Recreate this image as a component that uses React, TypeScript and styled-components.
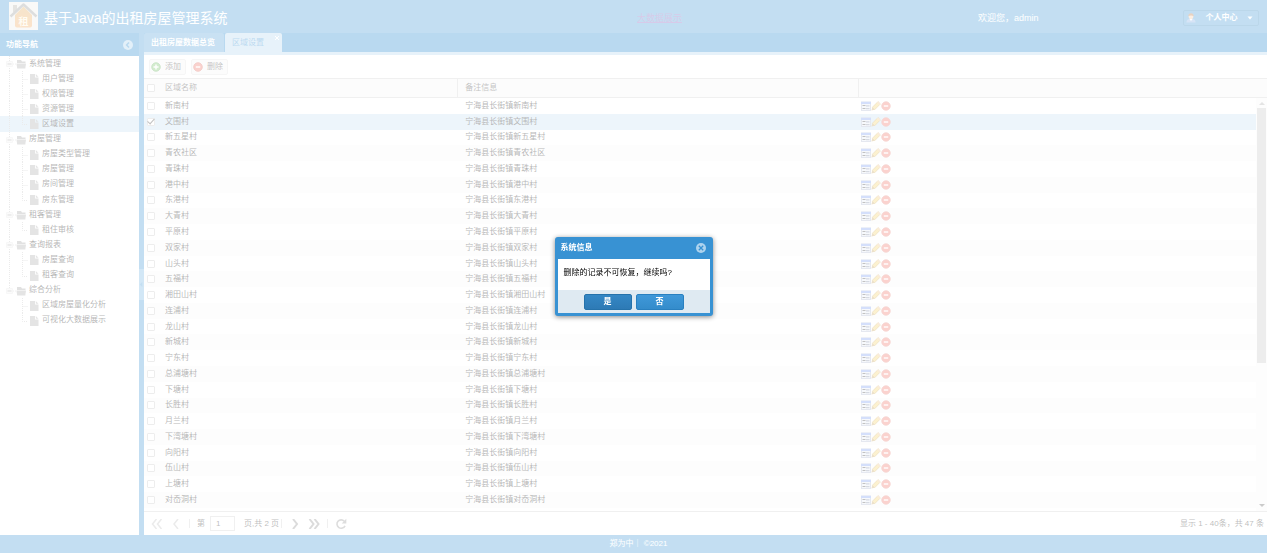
import React from 'react';
import styled, { createGlobalStyle, css } from 'styled-components';

const BLUE = '#3892d3';
const DEEP = '#157fcc';
const SOFT = '#add2ed';
const FONT = '"Liberation Sans", "Noto Sans CJK SC", sans-serif';

const GlobalStyle = createGlobalStyle`
  *, *::before, *::after { box-sizing: border-box; }
  body { margin: 0; font: 8px/12px ${FONT}; color: #000; background: #fff; }
  button, input { font: inherit; color: inherit; margin: 0; padding: 0; }
  button { border: 0; background: none; cursor: pointer; }
  ul { list-style: none; margin: 0; padding: 0; }
  svg { display: block; flex: none; }
`;

const Page = styled.div`
  display: flex;
  flex-direction: column;
  height: 100vh;
  background: ${BLUE};
`;

const TopBar = styled.header`
  flex: none;
  display: grid;
  grid-template-columns: 637fr 341fr 289fr;
  align-items: center;
  height: 33px;
  padding-bottom: 1px;
  color: #fff;
`;

const Brand = styled.div`
  display: flex;
  align-items: center;
  gap: 6px;
  padding-left: 9px;
`;

const Title = styled.h1`
  margin: 0;
  padding-top: 3px;
  font-size: 14px;
  line-height: 20px;
  font-weight: 400;
`;

const BigDataLink = styled.a`
  padding-top: 3px;
  font-size: 9px;
  color: #7a4fb4;
`;

const UserArea = styled.div`
  display: flex;
  align-items: center;
  justify-content: space-between;
  padding: 4px 8px 0 0;
  font-size: 9px;
`;

const UserButton = styled.button`
  display: flex;
  align-items: center;
  justify-content: space-between;
  width: 76px;
  height: 16px;
  padding: 0 5px 0 2px;
  border: 1px solid #1c78ba;
  border-radius: 2px;
  font-size: 8px;
  font-weight: 700;
`;

const Middle = styled.div`
  flex: 1;
  min-height: 0;
  display: flex;
`;

const Side = styled.aside`
  flex: none;
  width: 139px;
  background: #fff;
`;

const SideHeader = styled.div`
  display: flex;
  align-items: center;
  justify-content: space-between;
  height: 23px;
  padding: 0 6px;
  background: ${DEEP};
  color: #fff;
  font-weight: 700;
`;

const Tree = styled.ul`
  display: grid;
  grid-auto-rows: 1fr;
  height: 272px;
`;

const TreeRow = styled.li<{ $selected?: boolean }>`
  display: flex;
  align-items: center;
  min-height: 0;
  background: ${p => (p.$selected ? '#c1ddf1' : 'transparent')};
`;

const TreeLabel = styled.span`
  padding-left: 3px;
  white-space: nowrap;
`;

const Splitter = styled.div`
  flex: none;
  display: flex;
  align-items: center;
  width: 5px;
`;

const SplitHandle = styled.button`
  display: grid;
  place-items: center;
  width: 5px;
  height: 31px;
  background: #68addf;
`;

const Main = styled.main`
  flex: 1;
  min-width: 0;
  display: flex;
  flex-direction: column;
  background: #fff;
`;

const TabBar = styled.div`
  flex: none;
  display: flex;
  gap: 1px;
  height: 22px;
  background: ${DEEP};
  border-bottom: 3px solid ${SOFT};
`;

const Tab = styled.div<{ $active?: boolean }>`
  display: flex;
  padding: 0 3px 0 7px;
  border-radius: 2px 2px 0 0;
  background: ${p => (p.$active ? SOFT : '#4b9cd7')};
  color: ${p => (p.$active ? DEEP : '#fff')};
`;

const TabButton = styled.button<{ $active?: boolean }>`
  padding-right: ${p => (p.$active ? 11 : 6)}px;
  font-weight: ${p => (p.$active ? 400 : 700)};
`;

const TabClose = styled.button`
  align-self: flex-start;
  padding-top: 3px;
`;

const Toolbar = styled.div`
  flex: none;
  display: flex;
  align-items: center;
  gap: 5px;
  height: 24px;
  padding: 0 5px;
  border-bottom: 1px solid #cecece;
`;

const ToolButton = styled.button`
  display: flex;
  align-items: center;
  gap: 4px;
  height: 16px;
  width: 37px;
  padding-left: 1px;
  border: 1px solid #e1e1e1;
  border-radius: 2px;
  background: #f5f5f5;
  color: #333;
`;

const GridArea = styled.div`
  flex: 1;
  min-height: 0;
  display: flex;
  background: #fff;
`;

const TableBox = styled.div`
  flex: 1;
  min-width: 0;
  padding-bottom: 3px;
`;

const Table = styled.table`
  width: 100%;
  height: 100%;
  table-layout: fixed;
  border-collapse: separate;
  border-spacing: 0;
`;

const HeadCell = styled.th<{ $divided?: boolean }>`
  height: 19px;
  padding: 0 0 0 7px;
  text-align: left;
  font-weight: 400;
  color: #333;
  background: #f5f5f5;
  border-bottom: 1px solid #cecece;
  ${p => p.$divided && css`border-right: 1px solid #cecece;`}
`;

const Row = styled.tr<{ $selected?: boolean }>`
  background: #fff;
  &:nth-child(even) { background: #f8f8f8; }
  ${p => p.$selected && css`&&:nth-child(even) { background: #c1ddf1; }`}
`;

const Cell = styled.td`
  padding: 0 0 0 7px;
  line-height: 12px;
  white-space: nowrap;
`;

const CheckCell = styled(Cell)`
  padding: 0 0 0 3px;
`;

const HeadCheck = styled(HeadCell)`
  padding-left: 3px;
`;

const Check = styled.input.attrs({ type: 'checkbox' })`
  appearance: none;
  display: block;
  position: relative;
  width: 8px;
  height: 8px;
  border: 1px solid #c4c4c4;
  border-radius: 1px;
  background: #fff;
  &:checked::after {
    content: '';
    position: absolute;
    left: 1px;
    top: -2px;
    width: 4px;
    height: 7px;
    border: solid #333;
    border-width: 0 1px 1px 0;
    transform: rotate(42deg);
  }
`;

const Actions = styled.div`
  display: flex;
  margin-left: -5px;
`;

const ScrollColumn = styled.div`
  flex: none;
  display: flex;
  flex-direction: column;
  width: 11px;
`;

const ScrollHead = styled.div`
  height: 19px;
  background: #f5f5f5;
  border-bottom: 1px solid #cecece;
`;

const ScrollTrack = styled.div`
  flex: 1;
  display: flex;
  flex-direction: column;
  align-items: center;
  background: #f8f8f8;
`;

const ScrollArrow = styled.button`
  display: grid;
  place-items: center;
  width: 11px;
  height: 10px;
`;

const ScrollRail = styled.div`
  flex: 1;
  width: 9px;
`;

const ScrollThumb = styled.div`
  height: 65%;
  background: #c1c1c1;
`;

const Pager = styled.div`
  flex: none;
  display: flex;
  align-items: center;
  justify-content: space-between;
  height: 24px;
  padding: 0 3px 0 7px;
  border-top: 1px solid #cecece;
  color: #222;
`;

const PagerGroup = styled.div`
  display: flex;
  align-items: center;
`;

const PageButton = styled.button`
  display: grid;
  place-items: center;
  width: 19px;
  height: 16px;
  padding-right: 7px;
`;

const Divider = styled.span`
  width: 1px;
  height: 9px;
  margin-right: 7px;
  background: #cecece;
`;

const PageLabel = styled.label`
  display: flex;
  align-items: center;
  gap: 5px;
`;

const PageInput = styled.input`
  width: 25px;
  height: 15px;
  padding: 0 5px;
  border: 1px solid #cecece;
  background: #fff;
`;

const PageTotal = styled.span`
  padding: 0 2px 0 9px;
`;

const Footer = styled.footer`
  flex: none;
  height: 18px;
  padding-left: 10px;
  line-height: 18px;
  text-align: center;
  color: #fff;
  white-space: pre;
`;

const Mask = styled.div`
  position: fixed;
  inset: 0;
  display: grid;
  place-items: center;
  background: rgba(255, 255, 255, 0.7);
`;

const Dialog = styled.section`
  width: 158px;
  padding: 0 3px 3px;
  border-radius: 3px;
  background: ${BLUE};
  box-shadow: 0 1px 5px #888;
`;

const DialogHeader = styled.div`
  display: flex;
  align-items: center;
  justify-content: space-between;
  height: 22px;
  padding: 0 4px 0 3px;
  color: #fff;
  font-weight: 700;
`;

const DialogBody = styled.p`
  margin: 0;
  height: 31px;
  padding: 8px 6px;
  background: #fff;
`;

const DialogFooter = styled.div`
  display: flex;
  align-items: center;
  justify-content: center;
  gap: 4px;
  height: 23px;
  background: #dfeaf2;
`;

const DialogButton = styled.button<{ $focused?: boolean }>`
  width: 48px;
  height: 16px;
  border: 1px solid ${p => (p.$focused ? '#2572ab' : '#2980c0')};
  border-radius: 2px;
  background: ${p => (p.$focused ? 'linear-gradient(#3487c5, #2d7ab5)' : 'linear-gradient(#3f98d9, #348ccb)')};
  color: #fff;
  font-weight: 700;
`;

const IconButton = styled.button`
  display: block;
`;

type TreeItem = { label: string; folder?: boolean; last?: boolean; selected?: boolean; final?: boolean };

const tree: TreeItem[] = [
  { label: '系统管理', folder: true },
  { label: '用户管理' },
  { label: '权限管理' },
  { label: '资源管理' },
  { label: '区域设置', last: true, selected: true },
  { label: '房屋管理', folder: true },
  { label: '房屋类型管理' },
  { label: '房屋管理' },
  { label: '房间管理' },
  { label: '房东管理', last: true },
  { label: '租客管理', folder: true },
  { label: '租住审核', last: true },
  { label: '查询报表', folder: true },
  { label: '房屋查询' },
  { label: '租客查询', last: true },
  { label: '综合分析', folder: true, last: true },
  { label: '区域房屋量化分析', final: true },
  { label: '可视化大数据展示', last: true, final: true },
];

const villages = [
  '新南村', '文围村', '新五星村', '青农社区', '青珠村', '港中村', '东港村', '大青村', '平原村',
  '双家村', '山头村', '五福村', '湘田山村', '连浦村', '龙山村', '新城村', '宁东村', '总浦塘村',
  '下塘村', '长胜村', '月兰村', '下湾塘村', '向阳村', '伍山村', '上塘村', '对岙洞村',
];

const FolderGuide = ({ last }: { last?: boolean }) => (
  <svg width="26" height="15" viewBox="0 0 26 15">
    <path d={last ? 'M9.5 0V8' : 'M9.5 0V15'} stroke="#bbb" strokeDasharray="1 1" />
    <path d="M6.500 5.500h6v5h-6z" fill="#f0f0f0" stroke="#e4e4e4" />
    <path d="M7.500 8h4" stroke="#999" />
    <path d="M13 8h3" stroke="#ccc" strokeDasharray="1 1" />
    <path d="M17 4h4l1 1.500h3.500V7H17z" fill="#999" />
    <path d="M16.500 7.500h9.500l-.7 5H17.200z" fill="#a4a4a4" />
  </svg>
);

const LeafGuide = ({ last, final }: { last?: boolean; final?: boolean }) => (
  <svg width="39" height="15" viewBox="0 0 39 15">
    {!final && <path d="M9.500 0V15" stroke="#bbb" strokeDasharray="1 1" />}
    <path d={last ? 'M22.500 0V8.500H28' : 'M22.500 0V15M22.500 8.500H28'} fill="none" stroke="#bbb" strokeDasharray="1 1" />
    <path d="M30 3h5v3.500h3.500v6.500H30z" fill="#a4a4a4" />
    <path d="M35.800 3l2.700 2.700h-2.700z" fill="#a4a4a4" />
  </svg>
);

const Logo = () => (
  <svg width="29" height="28" viewBox="0 0 29 28">
    <defs>
      <linearGradient id="wall" x1="0" y1="0" x2="0" y2="1">
        <stop offset="0" stopColor="#e0a850" />
        <stop offset="1" stopColor="#f0a050" />
      </linearGradient>
    </defs>
    <rect width="29" height="28" fill="#e9ebe6" />
    <rect x="4" y="3" width="4" height="7" fill="#a7a39c" />
    <path d="M6 13l8.500-8.500L23 13v10.500q0 2-2 2H8q-2 0-2-2z" fill="url(#wall)" />
    <path d="M1.500 14.500L14.500 2.500l13 12" fill="none" stroke="#8d9090" strokeWidth="2.400" strokeLinejoin="round" />
    <text x="14.500" y="23" textAnchor="middle" fontSize="10" fontWeight="700" fill="#fff4d8">租</text>
  </svg>
);

const Person = () => (
  <svg width="10" height="10" viewBox="0 0 10 10">
    <path d="M.5 9.500q0-3.500 3-3.500h3q3 0 3 3.500z" fill="#7ba5e0" />
    <path d="M3.500 6l1.500 2 1.500-2z" fill="#fff" />
    <circle cx="5" cy="3.800" r="2.400" fill="#f5c9a0" />
    <path d="M2.200 3.300Q2.500.3 5 .3t2.800 3Q5 1.800 2.200 3.300z" fill="#b06a35" />
  </svg>
);

const CircleBack = () => (
  <svg width="10" height="10" viewBox="0 0 10 10">
    <circle cx="5" cy="5" r="5" fill="#a1cbe9" />
    <path d="M6 2.500L3.600 5 6 7.500" fill="none" stroke={DEEP} strokeWidth="1.500" />
  </svg>
);

const CircleClose = () => (
  <svg width="10" height="10" viewBox="0 0 10 10">
    <circle cx="5" cy="5" r="5" fill="#aed3ee" />
    <path d="M2.800 2.800l4.400 4.400M7.200 2.800L2.800 7.200" stroke={BLUE} strokeWidth="1.300" />
  </svg>
);

const Sign = ({ color, rim, plus }: { color: string; rim: string; plus?: boolean }) => (
  <svg width="10" height="10" viewBox="0 0 10 10">
    <circle cx="5" cy="5" r="4.300" fill={color} stroke={rim} strokeWidth=".8" />
    <path d={plus ? 'M2.500 5h5M5 2.500v5' : 'M2.800 5h4.400'} stroke="#fff" strokeWidth="1.400" />
  </svg>
);

const FormIcon = () => (
  <svg width="10" height="10" viewBox="0 0 10 10">
    <rect x=".5" y="1" width="9" height="8.500" fill="#e3e9f6" stroke="#a9b3cc" />
    <path d="M0 .8h10v2.200H0z" fill="#6f93f2" />
    <path d="M1.500 4.500h3M1.500 7.500h3" stroke="#333" strokeWidth="1.200" />
    <path d="M5 4.300h3.500v1.200H5zM5 7h3.500v1.200H5z" fill="#77839f" />
  </svg>
);

const Pencil = () => (
  <svg width="10" height="10" viewBox="0 0 10 10">
    <path d="M1.300 6.300L7 .6l2.400 2.300-5.700 5.800z" fill="#f5cf5e" stroke="#b98b2c" strokeWidth=".6" />
    <path d="M7 .6l2.400 2.300-1.100 1.100L6 1.700z" fill="#efc08a" />
    <path d="M1.300 6.300L.4 9.600l3.300-.9z" fill="#c09a50" />
  </svg>
);

const Chevrons = ({ left, double, strong }: { left?: boolean; double?: boolean; strong?: boolean }) => (
  <svg width={double ? 12 : 8} height="10" viewBox={double ? '0 0 12 10' : '0 0 8 10'}>
    <path
      d={
        left
          ? double ? 'M5.500 0L1.500 5l4 5M10.500 0l-4 5 4 5' : 'M6 0L2 5l4 5'
          : double ? 'M1.500 0l4 5-4 5M6.500 0l4 5-4 5' : 'M2 0l4 5-4 5'
      }
      fill="none"
      stroke={strong ? '#888' : '#bbb'}
      strokeWidth={strong ? 2 : 1.500}
    />
  </svg>
);

const Refresh = () => (
  <svg width="12" height="12" viewBox="0 0 12 12">
    <path d="M9.300 3.200A4.200 4.200 0 1 0 10 7.800" fill="none" stroke="#8c8c8c" strokeWidth="1.600" />
    <path d="M11.300.8v4.600H6.700z" fill="#8c8c8c" />
  </svg>
);

const Triangle = ({ d, fill, size = 6 }: { d: string; fill: string; size?: number }) => (
  <svg width={size} height={size} viewBox="0 0 6 6">
    <path d={d} fill={fill} />
  </svg>
);

export default function App() {
  return (
    <>
      <GlobalStyle />
      <Page>
        <TopBar>
          <Brand>
            <Logo />
            <Title>基于Java的出租房屋管理系统</Title>
          </Brand>
          <BigDataLink href="#screen">大数据展示</BigDataLink>
          <UserArea>
            <span>欢迎您，admin</span>
            <UserButton>
              <Person />
              <span>个人中心</span>
              <Triangle d="M.5 1.500h5L3 4.500z" fill="#fff" />
            </UserButton>
          </UserArea>
        </TopBar>

        <Middle>
          <Side>
            <SideHeader>
              <span>功能导航</span>
              <IconButton aria-label="折叠"><CircleBack /></IconButton>
            </SideHeader>
            <Tree>
              {tree.map((item, i) => (
                <TreeRow key={i} $selected={item.selected}>
                  {item.folder ? <FolderGuide last={item.last} /> : <LeafGuide last={item.last} final={item.final} />}
                  <TreeLabel>{item.label}</TreeLabel>
                </TreeRow>
              ))}
            </Tree>
          </Side>
          <Splitter>
            <SplitHandle aria-label="收起导航">
              <Triangle d="M4 0v6L1 3z" fill={BLUE} size={5} />
            </SplitHandle>
          </Splitter>

          <Main>
            <TabBar>
              <Tab><TabButton>出租房屋数据总览</TabButton></Tab>
              <Tab $active>
                <TabButton $active>区域设置</TabButton>
                <TabClose aria-label="关闭">
                  <svg width="4" height="4" viewBox="0 0 4 4">
                    <path d="M0 0l4 4M4 0L0 4" stroke="#fff" />
                  </svg>
                </TabClose>
              </Tab>
            </TabBar>
            <Toolbar>
              <ToolButton><Sign plus color="#6cbf5c" rim="#4a9c40" />添加</ToolButton>
              <ToolButton><Sign color="#ee6a5c" rim="#d0493c" />删除</ToolButton>
            </Toolbar>

            <GridArea>
              <TableBox>
                <Table>
                  <colgroup>
                    <col style={{ width: 14 }} />
                    <col style={{ width: '27%' }} />
                    <col style={{ width: '36%' }} />
                    <col />
                  </colgroup>
                  <thead>
                    <tr>
                      <HeadCheck><Check aria-label="全选" /></HeadCheck>
                      <HeadCell $divided>区域名称</HeadCell>
                      <HeadCell $divided>备注信息</HeadCell>
                      <HeadCell aria-label="操作" />
                    </tr>
                  </thead>
                  <tbody>
                    {villages.map((name, i) => (
                      <Row key={name} $selected={i === 1}>
                        <CheckCell><Check aria-label={name} defaultChecked={i === 1} /></CheckCell>
                        <Cell>{name}</Cell>
                        <Cell>宁海县长街镇{name}</Cell>
                        <Cell>
                          <Actions>
                            <IconButton aria-label="查看"><FormIcon /></IconButton>
                            <IconButton aria-label="编辑"><Pencil /></IconButton>
                            <IconButton aria-label="删除"><Sign color="#f0685c" rim="#e07a70" /></IconButton>
                          </Actions>
                        </Cell>
                      </Row>
                    ))}
                  </tbody>
                </Table>
              </TableBox>
              <ScrollColumn>
                <ScrollHead />
                <ScrollTrack>
                  <ScrollArrow aria-label="向上"><Triangle d="M0 5h6L3 2z" fill="#a3a3a3" /></ScrollArrow>
                  <ScrollRail><ScrollThumb /></ScrollRail>
                  <ScrollArrow aria-label="向下"><Triangle d="M0 1h6L3 4z" fill="#505050" /></ScrollArrow>
                </ScrollTrack>
              </ScrollColumn>
            </GridArea>

            <Pager>
              <PagerGroup>
                <PageButton aria-label="首页"><Chevrons left double /></PageButton>
                <PageButton aria-label="上一页"><Chevrons left /></PageButton>
                <Divider />
                <PageLabel>
                  第
                  <PageInput defaultValue="1" />
                </PageLabel>
                <PageTotal>页,共 2 页</PageTotal>
                <Divider />
                <PageButton aria-label="下一页"><Chevrons strong /></PageButton>
                <PageButton aria-label="末页"><Chevrons double strong /></PageButton>
                <Divider />
                <PageButton aria-label="刷新"><Refresh /></PageButton>
              </PagerGroup>
              <span>显示 1 - 40条，共 47 条</span>
            </Pager>
          </Main>
        </Middle>

        <Footer>{'郑为中｜ ©2021'}</Footer>
      </Page>

      <Mask>
        <Dialog role="dialog" aria-modal="true" aria-labelledby="dialog-title">
          <DialogHeader>
            <span id="dialog-title">系统信息</span>
            <IconButton aria-label="关闭"><CircleClose /></IconButton>
          </DialogHeader>
          <DialogBody>删除的记录不可恢复，继续吗?</DialogBody>
          <DialogFooter>
            <DialogButton $focused>是</DialogButton>
            <DialogButton>否</DialogButton>
          </DialogFooter>
        </Dialog>
      </Mask>
    </>
  );
}
